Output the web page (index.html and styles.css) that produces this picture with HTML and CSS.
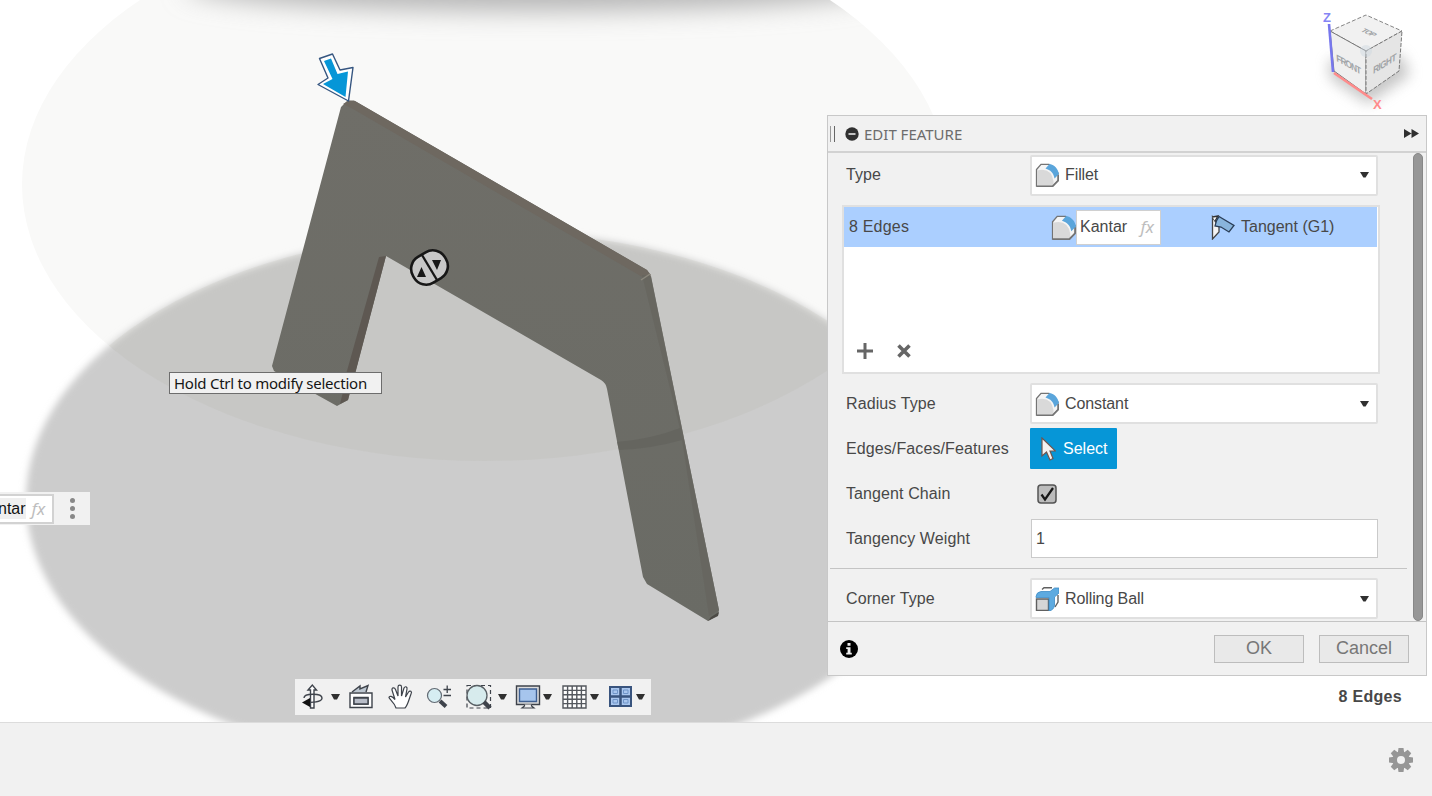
FILE: index.html
```
<!DOCTYPE html>
<html lang="en">
<head>
<meta charset="utf-8">
<title>Edit Feature</title>
<link rel="stylesheet" href="styles.css">
</head>
<body>
<svg class="defs" width="0" height="0" aria-hidden="true">
  <defs>
    <symbol id="fillet" viewBox="0 0 24 24">
      <path d="M1.5 23V6.500L6 1.300H14L23 10V18L18 23.200Z" fill="#f5f5f5" stroke="#747474" stroke-width="1.300"/>
      <path d="M2 23V7.500Q16 4 18.500 18V23Z" fill="#d9d9d9"/>
      <path d="M10.500 5.500L14.500 1C20 2 23 6 24 11L19.500 15.500C18.500 10 15.500 7 10.500 5.500Z" fill="#5aa5db"/>
      <path d="M1.500 23.200H17.500L23.500 17V12" fill="none" stroke="#747474" stroke-width="1.600"/>
    </symbol>
    <symbol id="caret" viewBox="0 0 9 6"><path d="M0 0H9L5.600 5.500H3.400Z" fill="#303030"/></symbol>
  </defs>
</svg>
<div class="app">
  <main class="viewport">
    <svg class="scene" width="1432" height="722" viewBox="0 0 1432 722">
      <defs>
        <filter id="soft" x="-5%" y="-5%" width="110%" height="110%"><feGaussianBlur stdDeviation="3.500"/></filter>
        <filter id="haze" x="-10%" y="-60%" width="120%" height="220%"><feGaussianBlur stdDeviation="13"/></filter>
        <filter id="glow" x="-40%" y="-40%" width="180%" height="180%"><feGaussianBlur stdDeviation="7"/></filter>
        <clipPath id="disc"><ellipse cx="485" cy="184.500" rx="463" ry="276.500"/></clipPath>
        <linearGradient id="metal" x1="0" y1="0" x2="0" y2="1"><stop offset="0" stop-color="#6f6e68"/><stop offset="1" stop-color="#6a6b65"/></linearGradient>
      </defs>
      <ellipse cx="485" cy="184.500" rx="463" ry="276.500" fill="#f9f9f8"/>
      <ellipse cx="485" cy="500" rx="459" ry="269" fill="#cccccc" filter="url(#soft)"/>
      <ellipse cx="485" cy="184.500" rx="463" ry="276.500" fill="#aaa99e" opacity="0.130" clip-path="url(#lower)"/>
      <clipPath id="lower"><ellipse cx="485" cy="500" rx="459" ry="269"/></clipPath>
      <g clip-path="url(#disc)"><ellipse cx="535" cy="-14" rx="350" ry="25" fill="#b5b5b5" filter="url(#haze)"/></g>

      <path d="M341 107L347 101L354 100.500L647 270L651 277L719 610L718 615L708 621L647 584L643 577L607 389Q606 383 601 380L386 256L348 400L337 406L274 371L272 366Z" fill="url(#metal)"/>
      <path d="M343 104L349 100.500L355 101L647 270L651 275L647 280L639 275L353 109Z" fill="#6e6860"/>
      <path d="M642 275L651 276L719 610L709 616L681 433Z" fill="#66655f" opacity=".8"/>
      <path d="M641 280L650 274" stroke="#8b887d" stroke-width="1.500"/>
      <path d="M617 442Q652 439 680 428L682 440Q650 449 619 450Z" fill="#62625c" opacity=".7"/>
      <path d="M379 257L386 256L354 378H345Z" fill="#5e5852"/>
      <path d="M346 380L353 380L348 400L340 404Z" fill="#5e5852"/>
      <path d="M711 617L719 612L718 616L708 621Z" fill="#4d4b46"/>

      <path d="M319.500 58.500L332.500 54L340 70L353 67.500L348.500 101L318 84.500L328 78Z" fill="#fff" stroke="#365680" stroke-width="1.400" stroke-linejoin="round"/>
      <path d="M324 61L331 58.500L337.500 74L348 71.500L345.500 97L323 84L332.500 79Z" fill="#0696d7"/>

      <g transform="translate(429.500 267.500) rotate(-31)">
        <rect x="-18.500" y="-15" width="37" height="30" rx="14" fill="#c8c8c8" stroke="#171717" stroke-width="2.600"/>
        <path d="M0-15V15" stroke="#171717" stroke-width="2.200"/>
      </g>
      <path d="M417 277H426L421.500 267ZM432 260H441L437 270Z" fill="#171717"/>

      <g class="cube">
        <path d="M1329 60L1402 55L1410 75L1368 104L1330 78Z" fill="#999" opacity=".55" filter="url(#glow)"/>
        <path d="M1330 31L1366 15L1402 31L1366 51Z" fill="#f1f1f1" stroke="#777" stroke-width=".9" stroke-dasharray="4 2"/>
        <path d="M1330 31L1366 51V94L1334 71Z" fill="#efefef" stroke="#777" stroke-width="1"/>
        <path d="M1402 31L1366 51V94L1399 71Z" fill="#e5e5e5" stroke="#777" stroke-width="1" stroke-dasharray="4 1.500"/>
        <circle cx="1366" cy="51" r="6" fill="#cdd7e0" opacity=".45"/>
        <text class="face" transform="matrix(.83 .46 .06 1 1336.500 61)" textLength="30">FRONT</text>
        <text class="face" transform="matrix(.83 -.5 -.04 1 1373 74)" textLength="28">RIGHT</text>
        <text class="face face-top" transform="matrix(.72 .34 -.7 .4 1360 31)" textLength="18">TOP</text>
        <path d="M1329 24L1333 72" stroke="#7777ed" stroke-width="2.600"/>
        <path d="M1334 73L1372 99" stroke="#ff8b8b" stroke-width="2.600"/>
        <text class="axis axis-z" x="1323" y="21.500">Z</text>
        <text class="axis axis-x" x="1373" y="108.500">X</text>
      </g>
    </svg>

    <div class="tooltip"><span>Hold Ctrl to modify selection</span></div>

    <div class="value-chip">
      <div class="chip-field"><span class="chip-text">ntar</span><span class="fx">fx</span></div>
      <div class="dots"><i></i><i></i><i></i></div>
    </div>

    <nav class="toolbar">
      <svg width="356" height="36" viewBox="295 679 356 36" fill="none" stroke="#3e434b" stroke-width="1.400">
        <path d="M310.500 708V690H308L312.300 685L316.500 690H314V708Z" fill="#fff"/>
        <path d="M304 698C304 693 322 693 322 698C322 701.500 316 702.500 307 702.500"/>
        <path d="M310 698L302 702.500L310 707Z" fill="#111" stroke="none"/>
        <path d="M350 693V707.500H372V693ZM354 697.500H368V704H354Z" fill="#fff"/><path d="M354 698H368V704H354Z" fill="#b8bdc8"/>
        <path d="M352 692L360 686V689L368 685.500L366 692" fill="#bcc6d0"/>
        <path d="M396 708C394 702 390 700 389 697.500C389.500 695.500 392 696 395 699.500L392 690C391.500 687.500 394.500 687 395.500 689.500L398 696V687C398 684.500 401.500 684.500 401.500 687V696L404 688C405 686 407.500 686.500 407 689L405.500 697L408.500 692C410 690 412.500 691.500 411 694C409 699 408 705 405 708Z" fill="#fff" stroke-width="1.200"/>
        <circle cx="434.500" cy="695.500" r="7" fill="#d6edf2" stroke="#626a73" stroke-width="1.200"/>
        <path d="M440 701L446 706.500" stroke-width="4"/><path d="M443.500 689.500H451M447.200 685.500V693M443.500 695.500H451" stroke-width="1.300"/>
        <path d="M467 685.500H490.500V708H467Z" stroke-dasharray="4 3" stroke-width="1.200"/>
        <circle cx="477" cy="695.500" r="10" fill="#d7ebed" stroke="#585f64" stroke-width="1.300"/><path d="M484 702L490 708" stroke-width="4.500"/>
        <path d="M516.500 686H539.500V704.500H516.500Z" fill="#ddd"/><path d="M519.500 689H536.500V701.500H519.500Z" fill="#a6c5ed" stroke="#3e5f91"/>
        <path d="M524.500 704.500V706L522 708H534L531.500 706V704.500" fill="#eee" stroke-width="1.200"/>
        <path d="M563 686H586V708H563ZM567.600 686V708M572.200 686V708M576.800 686V708M581.400 686V708M563 690.400H586M563 694.800H586M563 699.200H586M563 703.600H586" fill="#fff" stroke="#54585e"/>
        <path d="M610 687H631V706H610Z" fill="#a9c6ee" stroke="#39547e" stroke-width="2"/><path d="M620.500 687V706M610 696.500H631" stroke="#39547e" stroke-width="2.500"/><path d="M613 690H617.500V693.500H613ZM623.500 690H628V693.500H623.500ZM613 699.500H617.500V703H613ZM623.500 699.500H628V703H623.500Z" stroke="#6f94c7" stroke-width="1"/>
        <g fill="#303030" stroke="none"><path d="M331 694H340L337 699.500H334ZM498 694H507L504 699.500H501ZM543 694H552L549 699.500H546ZM590 694H599L596 699.500H593ZM636 694H645L642 699.500H639Z"/></g>
      </svg>
    </nav>

    <section class="panel">
      <header class="panel-head">
        <span class="grip"></span>
        <svg width="14" height="14" viewBox="0 0 14 14"><circle cx="7" cy="7" r="6.700" fill="#303030"/><path d="M3.500 7H10.500" stroke="#ddd" stroke-width="1.700"/></svg>
        <h1>EDIT FEATURE</h1>
        <svg class="expand" width="15" height="9" viewBox="0 0 15 9"><path d="M0 0L7.500 4.500L0 9ZM7.500 0L15 4.500L7.500 9Z" fill="#303030"/></svg>
      </header>
      <div class="panel-body">
        <div class="row"><label>Type</label><div class="combo"><svg width="24" height="24"><use href="#fillet"/></svg><span>Fillet</span><svg class="arrow" width="9" height="6"><use href="#caret"/></svg></div></div>
        <div class="list">
          <div class="list-row">
            <span class="count">8 Edges</span>
            <svg width="25" height="25"><use href="#fillet"/></svg>
            <div class="radius"><span>Kantar</span><span class="fx">fx</span></div>
            <svg class="tangent" width="24" height="25" viewBox="0 0 24 25"><path d="M1.500 2V24L8 17V11L4 6Z" fill="#f4f4f4" stroke="#444" stroke-width="1.300"/><path d="M1.500 2L7 1L4 6" fill="#fff" stroke="#333" stroke-width="1.300"/><path d="M8 1.500L23 10.500L18 17L10 12L4 11Q5 5 8 1.500Z" fill="#89b5dc" stroke="#2a3d56" stroke-width="1.300"/></svg>
            <span>Tangent (G1)</span>
          </div>
          <div class="list-tools">
            <svg width="16" height="16" viewBox="0 0 16 16"><path d="M8 0V16M0 8H16" stroke="#666" stroke-width="3"/></svg>
            <svg width="14" height="14" viewBox="0 0 14 14"><path d="M1.500 1.500L12.500 12.500M12.500 1.500L1.500 12.500" stroke="#666" stroke-width="3.600"/></svg>
          </div>
        </div>
        <div class="row"><label>Radius Type</label><div class="combo"><svg width="24" height="24"><use href="#fillet"/></svg><span>Constant</span><svg class="arrow" width="9" height="6"><use href="#caret"/></svg></div></div>
        <div class="row"><label>Edges/Faces/Features</label><button class="select"><svg width="15" height="24" viewBox="0 0 15 24"><path d="M1 1V19L5.500 15L9 23L12 21.500L9 14H14.500Z" fill="#f2f2f2" stroke="#70554d" stroke-width="1.200"/></svg>Select</button></div>
        <div class="row"><label>Tangent Chain</label><svg class="check" width="20" height="20" viewBox="0 0 20 20"><rect x="1" y="1" width="18" height="18" rx="3" fill="#bcbcbc" stroke="#545454" stroke-width="1.500"/><path d="M4.500 10.500L8 15.500L16 4" fill="none" stroke="#161616" stroke-width="2.200"/></svg></div>
        <div class="row"><label>Tangency Weight</label><div class="input">1</div></div>
        <div class="divider"></div>
        <div class="row"><label>Corner Type</label><div class="combo"><svg width="24" height="24" viewBox="0 0 24 24"><path d="M1.500 12H13.500V23.500H1.500Z" fill="#d6d6d6" stroke="#606060" stroke-width="1.400"/><path d="M7 2.500L9 .8H17M23 8V15L20 20" fill="none" stroke="#606060" stroke-width="1.400"/><path d="M1 9.500Q1.500 5 6 4.500H15L19.500 1H24V6L19.500 10V18Q19 23 14 24V10.500H1Z" fill="#5daae0" stroke="#3d8bc5" stroke-width=".8"/></svg><span>Rolling Ball</span><svg class="arrow" width="9" height="6"><use href="#caret"/></svg></div></div>
        <span class="scrollbar"></span>
      </div>
      <footer class="panel-foot">
        <svg width="18" height="18" viewBox="0 0 18 18"><circle cx="9" cy="9" r="9" fill="#000"/><path d="M7.500 3H10.500V5.700H7.500ZM6.200 7.200H10.500V12.700H11.800V14.500H6.200V12.700H7.600V9H6.200Z" fill="#eee"/></svg>
        <button class="btn ok">OK</button><button class="btn cancel">Cancel</button>
      </footer>
    </section>
    <div class="status">8 Edges</div>
  </main>
  <footer class="timeline">
    <svg width="26" height="26" viewBox="-13 -13 26 26"><g fill="#969696"><path id="tooth" d="M-2.500-12H2.500L3.200-7H-3.200Z"/><use href="#tooth" transform="rotate(45)"/><use href="#tooth" transform="rotate(90)"/><use href="#tooth" transform="rotate(135)"/><use href="#tooth" transform="rotate(180)"/><use href="#tooth" transform="rotate(225)"/><use href="#tooth" transform="rotate(270)"/><use href="#tooth" transform="rotate(315)"/></g><circle r="6.300" fill="none" stroke="#969696" stroke-width="4.600"/></svg>
  </footer>
</div>
</body>
</html>
```
FILE: styles.css
```
* { box-sizing: border-box; }
body { margin: 0; font: 16px "Liberation Sans", Arial, sans-serif; color: #484848; }
svg { display: block; flex: none; }
.defs { position: absolute; }
.app { width: 1432px; height: 796px; display: flex; flex-direction: column; overflow: hidden; background: #fff; }
.viewport { position: relative; height: 722px; flex: none; }
.face { font: bold 10px "Liberation Sans", sans-serif; fill: #a0a3a6; }
.face-top { font-size: 10px; }
.axis { font: bold 13px "Liberation Sans", sans-serif; }
.axis-z { fill: #8585f5; }
.axis-x { fill: #ff8b8b; }

.tooltip { position: absolute; left: 169px; top: 372px; width: 213px; height: 22px; border: 1px solid #6d6d6d; background: #f1f1f1; color: #151515; font: 15px/21px "Noto Sans", "Open Sans", sans-serif; padding-left: 4px; white-space: nowrap; letter-spacing: -.25px; }
.value-chip { position: absolute; left: 0; top: 492px; width: 90px; height: 33px; background: #f1f1f1; display: flex; align-items: center; }
.chip-field { width: 54px; height: 30px; border: 2px solid #d2d2d2; border-left: 0; background: #fff; display: flex; align-items: center; gap: 6px; }
.chip-text { background: #efefef; color: #111; line-height: 21px; margin-left: -2px; }
.fx { font: italic 17px "Noto Sans", "Open Sans", sans-serif; color: #bdbdbd; line-height: 20px; }
.dots { display: grid; gap: 3px; margin-left: 16px; }
.dots i { width: 5px; height: 5px; border-radius: 50%; background: #888; }
.toolbar { position: absolute; left: 295px; top: 679px; background: #f1f1f1; }

.panel { position: absolute; left: 827px; top: 115px; width: 600px; height: 561px; background: #f1f1f1; border: 1px solid #c8c8c8; display: flex; flex-direction: column; }
.panel-head { height: 37px; border-bottom: 2px solid #d2d2d2; display: flex; align-items: center; padding: 0 7px 0 2px; }
.grip { width: 5px; height: 16px; border-left: 1px solid #999; border-right: 1px solid #666; margin-right: 10px; }
h1 { margin: 0 0 0 5px; font: 15px "Noto Sans", "Open Sans", sans-serif; color: #6c6c6c; }
.expand { margin-left: auto; }
.panel-body { position: relative; height: 468px; padding-top: 1px; }
.row { display: flex; align-items: center; height: 45px; padding-left: 18px; }
.row:first-child { height: 42px; }
.row label { width: 184px; white-space: nowrap; flex: none; letter-spacing: .1px; }
.combo { width: 348px; height: 41px; border: 2px solid #e0e0e0; border-radius: 2px; background: #fff; display: flex; align-items: center; gap: 6px; padding: 0 7px 0 3px; letter-spacing: -.1px; }
.arrow { margin-left: auto; }
.list { margin: 9px 0 7px 14px; width: 538px; height: 169px; border: 2px solid #e0e0e0; background: #fff; }
.list-row { height: 40px; background: #abcfff; display: flex; align-items: center; margin-right: 1px; padding-left: 5px; }
.count { width: 202px; letter-spacing: .2px; }
.radius { width: 85px; height: 35px; border: 1px solid #d0d0d0; background: #fff; display: flex; align-items: center; justify-content: space-between; padding: 0 6px 0 3px; }
.tangent { margin: 0 6px 0 50px; }
.list-tools { display: flex; align-items: center; gap: 24px; padding: 96px 0 0 13px; }
.select { width: 87px; height: 41px; border: 0; border-radius: 1px; background: #0696d7; color: #fff; font: inherit; display: flex; align-items: center; gap: 7px; padding: 0 0 0 11px; }
.check { margin-left: 7px; }
.input { width: 347px; height: 39px; margin-left: 1px; border: 1px solid #cacaca; background: #fff; line-height: 37px; padding-left: 4px; }
.divider { height: 1px; width: 577px; margin: 7px 0 7px 2px; background: #c4c4c4; }
.scrollbar { position: absolute; top: 0; right: 3px; width: 10px; height: 468px; border-radius: 5px; background: #979797; border: 1px solid #888; }
.panel-foot { height: 54px; border-top: 1px solid #c4c4c4; display: flex; align-items: center; padding: 0 17px 0 12px; }
.btn { width: 90px; height: 28px; border: 1px solid #bdbdbd; background: #e9e9e9; color: #777; font: 18px "Liberation Sans", Arial, sans-serif; padding: 0; line-height: 25px; }
.ok { margin-left: auto; margin-right: 15px; }
.status { position: absolute; right: 30px; top: 688px; font-weight: bold; font-size: 16px; line-height: 18px; letter-spacing: .3px; color: #484848; }
.timeline { flex: 1; background: #f1f1f1; border-top: 1px solid #dcdcdc; display: flex; align-items: center; justify-content: flex-end; padding-right: 18px; }
```
